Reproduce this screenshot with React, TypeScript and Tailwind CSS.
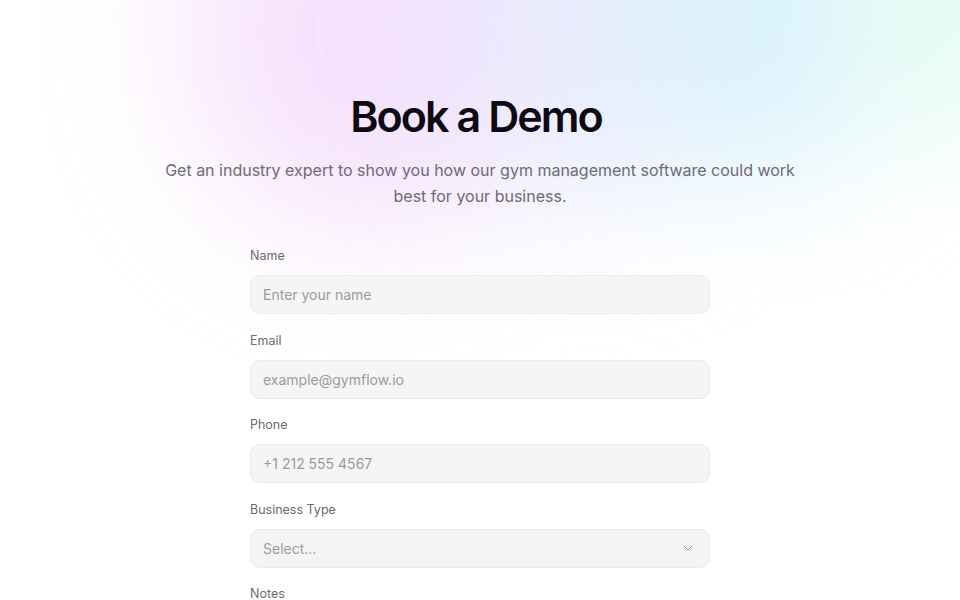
import { ChevronDown } from 'lucide-react';

const fields = [
  { label: 'Name', placeholder: 'Enter your name' },
  { label: 'Email', placeholder: 'example@gymflow.io' },
  { label: 'Phone', placeholder: '+1 212 555 4567' },
];

export default function App() {
  return (
    <main
      className="relative min-h-screen overflow-hidden bg-white"
      style={{ fontFamily: 'Inter, "Noto Sans", sans-serif' }}
    >
      {/* soft colour glow behind the header */}
      <div className="pointer-events-none absolute inset-0">
        <div className="absolute left-[190px] top-[-170px] h-[400px] w-[360px] rounded-full bg-[#f3d4fb] opacity-70 blur-[70px]" />
        <div className="absolute left-[440px] top-[-170px] h-[380px] w-[300px] rounded-full bg-[#e3e8fd] opacity-70 blur-[70px]" />
        <div className="absolute left-[650px] top-[-180px] h-[360px] w-[240px] rounded-full bg-[#cdeffc] opacity-70 blur-[70px]" />
        <div className="absolute left-[860px] top-[-140px] h-[280px] w-[180px] rounded-full bg-[#dcfbef] opacity-70 blur-[60px]" />
      </div>

      <div className="relative flex flex-col items-center pt-[95px]">
        <h1 className="mr-2 text-[43px] font-semibold leading-none tracking-[-0.045em] text-[#0d0a14]">
          Book a Demo
        </h1>
        <p className="mt-[19px] max-w-[650px] text-center text-[16px] leading-[26px] text-[#6d6b73]">
          Get an industry expert to show you how our gym management software could work best for your business.
        </p>

        <form className="mt-[39px] flex w-[460px] flex-col gap-[18.5px]">
          {fields.map((f) => (
            <div key={f.label} className="flex flex-col gap-[11px]">
              <label className="text-[12.5px] leading-4 text-[#6b6b6b]">{f.label}</label>
              <input
                placeholder={f.placeholder}
                className="h-[39px] rounded-[10px] border border-[#ebebeb] bg-[#f4f4f4]/90 px-3 text-[14px] text-[#333] placeholder:text-[#9b9b9b] outline-none"
              />
            </div>
          ))}
          <div className="flex flex-col gap-[11px]">
            <label className="text-[12.5px] leading-4 text-[#6b6b6b]">Business Type</label>
            <div className="flex h-[39px] items-center justify-between rounded-[10px] border border-[#ebebeb] bg-[#f4f4f4] px-3">
              <span className="text-[14px] text-[#9b9b9b]">Select...</span>
              <ChevronDown className="mr-px h-4 w-4 text-[#8a8a8a]" strokeWidth={1.5} />
            </div>
          </div>
          <div className="flex flex-col gap-[11px]">
            <label className="text-[12.5px] leading-4 text-[#6b6b6b]">Notes</label>
            <textarea className="h-[100px] rounded-[10px] border border-[#ebebeb] bg-[#f4f4f4] px-3 py-2 text-[14px] outline-none" />
          </div>
        </form>
      </div>
    </main>
  );
}
